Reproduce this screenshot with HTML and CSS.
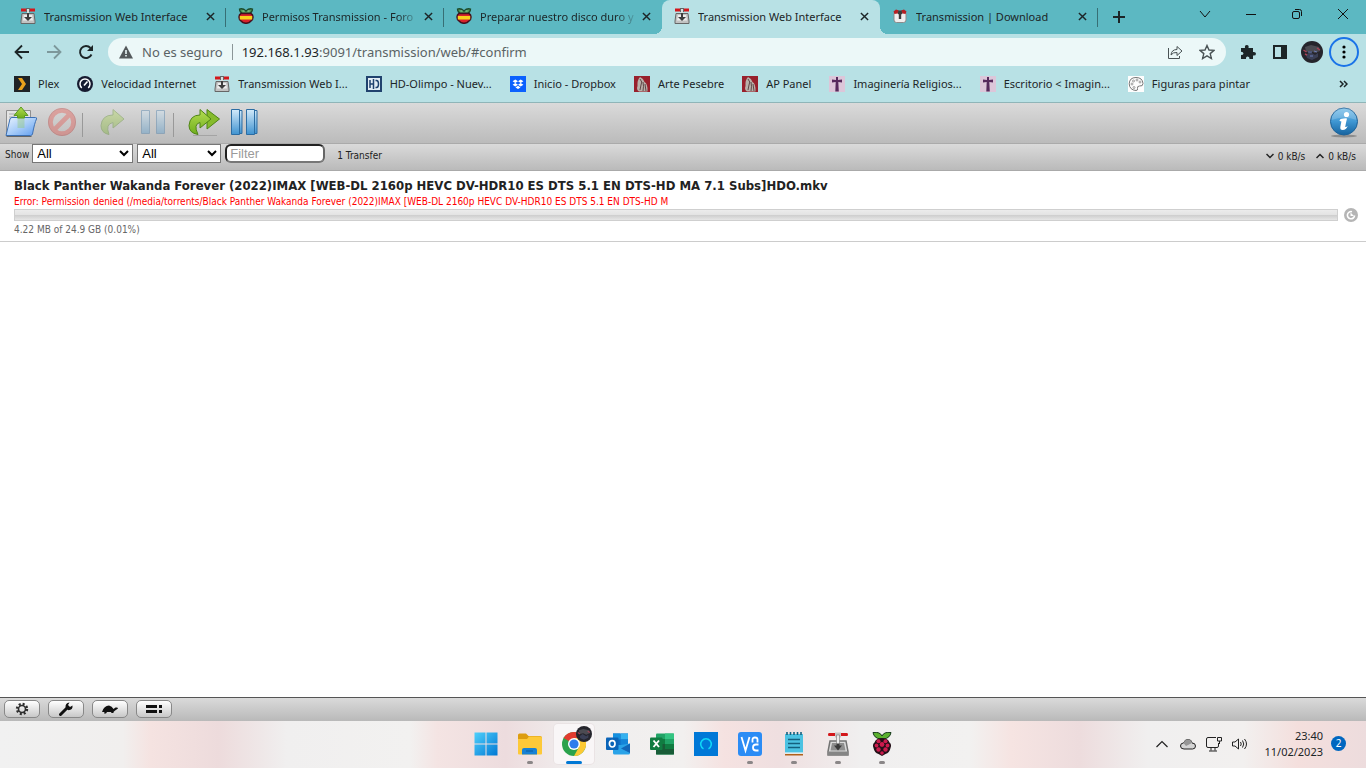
FILE: index.html
```html
<!DOCTYPE html>
<html lang="es">
<head>
    <meta charset="UTF-8">
    <meta name="viewport" content="width=device-width, initial-scale=1.0">
    <title>Transmission Web Interface</title>
    <link rel="stylesheet" href="styles.css">
</head>
<body>
    <!-- shared icons -->
    <svg class="sprite" aria-hidden="true">
        <defs>
            <linearGradient id="g-blue" x1="0" y1="0" x2="0" y2="1">
                <stop offset="0" stop-color="#d3eafa"/><stop offset="1" stop-color="#3f93d0"/>
            </linearGradient>
            <linearGradient id="g-folder" x1="0" y1="0" x2="1" y2="1">
                <stop offset="0" stop-color="#e9f3fe"/><stop offset=".5" stop-color="#a9cdf8"/><stop offset="1" stop-color="#5f9df0"/>
            </linearGradient>
            <linearGradient id="g-green" x1="0" y1="0" x2="0" y2="1">
                <stop offset="0" stop-color="#b5dd52"/><stop offset="1" stop-color="#6fae1c"/>
            </linearGradient>
            <linearGradient id="g-info" x1="0" y1="0" x2="0" y2="1">
                <stop offset="0" stop-color="#7dc1ea"/><stop offset=".5" stop-color="#3f97d3"/><stop offset="1" stop-color="#16639f"/>
            </linearGradient>
            <linearGradient id="g-win" x1="0" y1="0" x2="1" y2="1">
                <stop offset="0" stop-color="#4fd0fb"/><stop offset="1" stop-color="#0078d4"/>
            </linearGradient>
        </defs>
        <symbol id="i-transmission" viewBox="0 0 24 24">
            <path d="M4 9h16l2 10.500V23H2v-3.500z" fill="#dadada" stroke="#737373" stroke-width="1.500"/>
            <path d="M2 19.500h20V23H2z" fill="#858585"/>
            <path d="M6 11h12l1.500 7.500h-15z" fill="#8e8e8e"/>
            <path d="M3 1h18q1 0 1 1.500T21 4H3Q2 4 2 2.500T3 1z" fill="#d3171b"/>
            <path d="M9 .5h6v5H9z" fill="#c4c4c4"/>
            <path d="M10.500 3h3v11h-3z" fill="#ececec" stroke="#777" stroke-width=".6"/>
            <path d="M8 13.500h2.500v-2h3v2H16l-4 5z" fill="#3a3a3a"/>
        </symbol>
        <symbol id="i-transmission-small" viewBox="0 0 16 16">
            <path d="M2 5.500h12l1 7.500v2.500H1V13z" fill="#c2c2c2" stroke="#666"/>
            <path d="M4 7h8l1 5.500H3z" fill="#ececec"/>
            <path d="M1 .5h5v3H1zM10 .5h5v3h-5z" fill="#d3171b"/>
            <path d="M6 0h4v4H6z" fill="#666"/>
            <path d="M7 1h2v8H7z" fill="#ddd"/>
            <path d="M7 5h2v4h3l-4 4-4-4h3z" fill="#3d3d3d"/>
        </symbol>
        <symbol id="i-trdl" viewBox="0 0 16 16">
            <rect x="2" y="3.500" width="12" height="11" rx="2.500" fill="#f1eeee" stroke="#8b8b8b"/>
            <path d="M1.500 3.500L4 1.500l3 1-1.500 3-3 .5zM14.500 3.500L12 1.500l-3 1 1.500 3 3 .5z" fill="#b81f22"/>
            <path d="M6.500 2.500h3l1 3-1.300 1V11H6.800V6.500l-1.300-1z" fill="#3d3d3d"/>
        </symbol>
        <symbol id="i-pi-es" viewBox="0 0 16 16">
            <path d="M1.500 1q3.500-1 6.500 2 3-3 6.500-2 0 3-3 4.500h-7q-3-1.500-3-4.500z" fill="#4f9a58" stroke="#1d4a2c" stroke-width="1.300"/>
            <path d="M4.500 3h2M9.500 3h2" stroke="#8cc8a0"/>
            <path d="M3 5.500h10q2 1 2 3.500t-2 4q-2 2.300-5 2.300T3 13Q1 11.500 1 9t2-3.500z" fill="#d8222c" stroke="#45101d" stroke-width="1.500"/>
            <path d="M1.800 8h12.400v3.500H1.800z" fill="#f8d21c"/>
        </symbol>
        <symbol id="i-close" viewBox="0 0 10 10">
            <path d="M1 1l8 8M9 1l-8 8" stroke="currentColor" stroke-width="1.600" fill="none"/>
        </symbol>
        <symbol id="i-arte" viewBox="0 0 16 16">
            <path d="M0 0h16v16H0z" fill="#98202c"/>
            <path d="M6 1q3.500 1.500 4.500 5 3.500 2 3 9.500H5q-3-2-1.500-5.500Q3 4 6 1z" fill="#b9b0aa"/>
            <path d="M6 3q3 3 1 6l-1 5M9 6q1 4 0 9M11 8l1 7" stroke="#5f4848" fill="none"/>
        </symbol>
        <symbol id="i-cross" viewBox="0 0 16 16">
            <path d="M0 0h16v16H0z" fill="#dcc6d9"/>
            <path d="M7 1h2v3l4-.5v3L9.300 6l.5 9.500H6.300L6.700 6 3 6.500v-3l4 .5z" fill="#562a5c"/>
        </symbol>
    </svg>

    <div class="browser">
        <header class="chrome">
            <div class="tab-strip">
                <div class="tab">
                    <svg class="favicon"><use href="#i-transmission-small"/></svg>
                    <span class="tab-title">Transmission Web Interface</span>
                    <button class="tab-close" aria-label="Cerrar"><svg><use href="#i-close"/></svg></button>
                </div>
                <div class="tab">
                    <svg class="favicon"><use href="#i-pi-es"/></svg>
                    <span class="tab-title fade">Permisos Transmission - Foro</span>
                    <button class="tab-close" aria-label="Cerrar"><svg><use href="#i-close"/></svg></button>
                </div>
                <div class="tab before-active">
                    <svg class="favicon"><use href="#i-pi-es"/></svg>
                    <span class="tab-title fade">Preparar nuestro disco duro y</span>
                    <button class="tab-close" aria-label="Cerrar"><svg><use href="#i-close"/></svg></button>
                </div>
                <div class="tab active">
                    <svg class="favicon"><use href="#i-transmission-small"/></svg>
                    <span class="tab-title">Transmission Web Interface</span>
                    <button class="tab-close" aria-label="Cerrar"><svg><use href="#i-close"/></svg></button>
                </div>
                <div class="tab">
                    <svg class="favicon"><use href="#i-trdl"/></svg>
                    <span class="tab-title">Transmission | Download</span>
                    <button class="tab-close" aria-label="Cerrar"><svg><use href="#i-close"/></svg></button>
                </div>
                <button class="new-tab" aria-label="Nueva pestaña">
                    <svg viewBox="0 0 12 12"><path d="M6 0v12M0 6h12" stroke="#1c2527" stroke-width="2"/></svg>
                </button>
                <div class="window-controls">
                    <button aria-label="Buscar pestañas"><svg viewBox="0 0 12 12"><path d="M1 3l5 6 5-6"/></svg></button>
                    <button aria-label="Minimizar"><svg viewBox="0 0 12 12"><path d="M1 6.500h10"/></svg></button>
                    <button aria-label="Restaurar"><svg viewBox="0 0 12 12"><rect x="1.500" y="3.500" width="7" height="7" rx="1.500"/><path d="M4 1.500h4.500q2 0 2 2V8"/></svg></button>
                    <button aria-label="Cerrar ventana"><svg viewBox="0 0 12 12"><path d="M1 1l10 10M11 1L1 11"/></svg></button>
                </div>
            </div>

            <div class="nav-bar">
                <button class="nav-button" aria-label="Atrás"><svg viewBox="0 0 16 16"><path d="M15 8H2M8 1.500L1.500 8 8 14.500" fill="none" stroke="#1c2527" stroke-width="1.800"/></svg></button>
                <button class="nav-button" aria-label="Adelante"><svg viewBox="0 0 16 16"><path d="M1 8h13M8 1.500L14.500 8 8 14.500" fill="none" stroke="#7d989b" stroke-width="1.800"/></svg></button>
                <button class="nav-button" aria-label="Recargar"><svg viewBox="0 0 16 16"><path d="M13.500 10.500A6 6 0 1 1 12.500 4" fill="none" stroke="#1c2527" stroke-width="1.900"/><path d="M15 1v6H9z" fill="#1c2527"/></svg></button>
                <div class="omnibox">
                    <svg class="warn" viewBox="0 0 14 14"><path d="M7 .5L14 13.500H0z" fill="#53595b"/><path d="M6.200 5h1.600v4H6.200zM6.200 10h1.600v1.600H6.200z" fill="#ecf8f8"/></svg>
                    <span class="insecure">No es seguro</span>
                    <span class="divider"></span>
                    <a class="url" href="#confirm"><span class="host">192.168.1.93</span>:9091/transmission/web/#confirm</a>
                    <button class="omni-button" aria-label="Compartir"><svg viewBox="0 0 16 16"><path d="M1.500 4v10.500h11V12M4 11q.5-5.500 6-5.500V2.500L15 7l-5 4.500V8.500Q6 8 4 11z" fill="none" stroke="#4a5355"/></svg></button>
                    <button class="omni-button" aria-label="Favorito"><svg viewBox="0 0 16 16"><path d="M8 1.500l2 4.500 5 .4-3.800 3.200 1.200 4.900L8 11.900l-4.400 2.600 1.200-4.900L1 6.400 6 6z" fill="none" stroke="#4a5355" stroke-width="1.400"/></svg></button>
                </div>
                <button class="ext-button" aria-label="Extensiones"><svg viewBox="0 0 16 16"><path d="M1 4h4q-.6-3 1.800-3T8.500 4H13v4q3-.4 3 1.700T13 11.500V15H9.500q.2-2.600-1.800-2.600T6 15H1v-4q2.500 0 2.500-1.600T1 7.800z" fill="#1c2527"/></svg></button>
                <button class="ext-button" aria-label="Panel lateral"><svg viewBox="0 0 16 16"><path d="M1 1h14v14H1zM3 3v10h6V3z" fill="#1c2527" fill-rule="evenodd"/></svg></button>
                <button class="ext-button avatar" aria-label="Perfil"><svg viewBox="0 0 22 22"><circle cx="11" cy="11" r="11" fill="#25252c"/><path d="M4 6l6-2 8 2 1 4-5 2-4-2-5 1z" fill="#4b4b52"/><path d="M5 14l4-3 5 3 3-2v4l-6 3-5-2z" fill="#3a3f55"/><path d="M2.500 9l3 2M16 7l3 2M4 13l2 1" stroke="#a84256" stroke-width="1.500"/><path d="M7 11h4M13 10l3 1M9 15h3" stroke="#6b7db8"/></svg></button>
                <button class="menu-button" aria-label="Menú"><svg viewBox="0 0 4 14"><circle cx="2" cy="2" r="1.600"/><circle cx="2" cy="7" r="1.600"/><circle cx="2" cy="12" r="1.600"/></svg></button>
            </div>

            <nav class="bookmarks">
                <a href="#"><svg class="favicon" viewBox="0 0 16 16"><path d="M0 0h16v16H0z" fill="#1f2326"/><path d="M4 2h4l4 6-4 6H4l4-6z" fill="#e9a11c"/></svg>Plex</a>
                <a href="#"><svg class="favicon" viewBox="0 0 16 16"><circle cx="8" cy="8" r="8" fill="#161b30"/><path d="M4.800 11.800A5 5 0 1 1 11.200 11.800" fill="none" stroke="#fff" stroke-width="1.500"/><path d="M7 9.500l3.500-4" stroke="#fff" stroke-width="1.600"/></svg>Velocidad Internet</a>
                <a href="#"><svg class="favicon"><use href="#i-transmission-small"/></svg>Transmission Web I...</a>
                <a href="#"><svg class="favicon" viewBox="0 0 16 16"><path d="M0 0h16v16H0z" fill="#20426e"/><path d="M2 2h12v12H2z" fill="#e3edf5"/><path d="M4 4v8M4 8h3M7.500 3v10M9.500 4.500h1q2 0 2 3.500t-2 3.500h-1" fill="none" stroke="#20426e" stroke-width="1.500"/></svg>HD-Olimpo - Nuev...</a>
                <a href="#"><svg class="favicon" viewBox="0 0 16 16"><path d="M0 0h16v16H0z" fill="#0b61fe"/><path d="M5.300 3.500L8 5.200 5.300 7 2.600 5.200zM10.700 3.500l2.700 1.700L10.700 7 8 5.200zM5.300 7L8 8.700l-2.700 1.800-2.700-1.800zM10.700 7l2.700 1.700-2.700 1.800L8 8.700zM8 9.700l2.500 1.700L8 13l-2.500-1.600z" fill="#fff"/></svg>Inicio - Dropbox</a>
                <a href="#"><svg class="favicon"><use href="#i-arte"/></svg>Arte Pesebre</a>
                <a href="#"><svg class="favicon"><use href="#i-arte"/></svg>AP Panel</a>
                <a href="#"><svg class="favicon"><use href="#i-cross"/></svg>Imaginería Religios...</a>
                <a href="#"><svg class="favicon"><use href="#i-cross"/></svg>Escritorio &lt; Imagin...</a>
                <a href="#"><svg class="favicon" viewBox="0 0 16 16"><path d="M0 0h16v16H0z" fill="#fdfdfd"/><path d="M8 1.500q-6.500 0-6.800 6.300Q1.500 14 8 14.500q2 0 1.500-2-.5-2.500 2-2.500 3.500.5 3.500-2.500Q14.500 1.500 8 1.500z" fill="none" stroke="#777"/><g fill="none" stroke="#888" stroke-width=".8"><circle cx="4" cy="8" r="1"/><circle cx="5.500" cy="5" r="1"/><circle cx="9" cy="4" r="1"/><circle cx="12" cy="6" r="1"/><circle cx="6" cy="11.500" r="1"/></g></svg>Figuras para pintar</a>
                <button class="more" aria-label="Más marcadores"><svg viewBox="0 0 8 8"><path d="M.5 1l3 3-3 3M4.500 1l3 3-3 3" fill="none" stroke="#1c2527" stroke-width="1.500"/></svg></button>
            </nav>
        </header>

        <main class="app">
            <div class="toolbar">
                <button class="tool" aria-label="Open Torrent"><svg viewBox="0 0 32 32">
                    <path d="M1.500 29V4.500h24V12" fill="#e4e4e4" stroke="#8f8f8f"/>
                    <path d="M4 8h8M4 11h6M4 14h4" stroke="#aaa"/>
                    <path d="M1 29.500L5 13q.5-1.500 2-1.500h23.500q1.500 0 1 1.500-2 4-4 15-.5 1.500-2 1.500z" fill="url(#g-folder)" stroke="#3c70b4"/>
                    <path d="M12.500 22V9.500H9L16 1l7 8.500h-3.500V22z" fill="#8dc65c" opacity=".35"/>
                    <path d="M12.500 12V9.500H9L16 1l7 8.500h-3.500V12z" fill="url(#g-green)" stroke="#5b9a22"/>
                    <path d="M1.500 30.500h25" stroke="#666"/>
                </svg></button>
                <button class="tool" aria-label="Remove Selected Torrents" disabled><svg viewBox="0 0 32 32"><circle cx="16" cy="16" r="11.500" fill="none" stroke="#e8443c" stroke-width="4.600"/><path d="M8 24L24 8" stroke="#e8443c" stroke-width="4.600"/><circle cx="16" cy="16" r="13.600" fill="none" stroke="#b02621"/></svg></button>
                <span class="tool-separator"></span>
                <button class="tool" aria-label="Start Selected Torrents" disabled><svg viewBox="0 0 32 32"><path d="M12 28.500Q4 27 4 19.500 5 9 16 9V3.500L27 13 16 22V16.500Q8 18 12 28.500z" fill="url(#g-green)" stroke="#4f8514"/></svg></button>
                <button class="tool" aria-label="Pause Selected Torrents" disabled><svg viewBox="0 0 32 32"><path d="M4.500 4.500h8v23h-8zM19.500 4.500h8v23h-8z" fill="url(#g-blue)" stroke="#2c6da3"/></svg></button>
                <span class="tool-separator"></span>
                <button class="tool" aria-label="Start All Torrents"><svg viewBox="0 0 32 32"><path d="M5 29.500h24" stroke="#888" opacity=".5"/><path d="M19 9V3.500L31.500 13 19 23z" fill="#86bb2c" stroke="#4f8514"/><path d="M10 28.500Q1 27 1 19.500 2 9 12 9V3.500L23 13 12 22V16.500Q5 18 10 28.500z" fill="url(#g-green)" stroke="#4f8514"/></svg></button>
                <button class="tool" aria-label="Pause All Torrents"><svg viewBox="0 0 32 32"><path d="M7.500 4.500h6.500v23H7.500zM22.500 4.500h6.500v23h-6.500z" fill="url(#g-blue)" stroke="#2c6da3"/><path d="M3.500 3.500h8v25h-8zM18.500 3.500h8v25h-8z" fill="url(#g-blue)" stroke="#2c6da3"/></svg></button>
                <button class="tool inspector" aria-label="Toggle Inspector"><svg viewBox="0 0 32 32"><ellipse cx="16" cy="30" rx="13" ry="1.500" fill="#8d8d8d"/><circle cx="16" cy="15.500" r="13.500" fill="url(#g-info)" stroke="#1d6299"/><path d="M3.500 14a12.500 12.500 0 0 1 25 0q-12-5-25 0z" fill="#fff" opacity=".18"/><circle cx="18.500" cy="8.500" r="2.600" fill="#fff"/><path d="M12.500 13q5-1 6.500-.5-1 4-1.800 8.500 1 .3 2.500-1-1.500 4-5 4-3 0-2.300-3.500l1-5q-1-.7-2-.5z" fill="#fff"/></svg></button>
            </div>

            <div class="statusbar">
                <label for="filter-mode">Show</label>
                <select id="filter-mode" class="filter-mode"><option>All</option><option>Active</option></select>
                <select class="filter-tracker" aria-label="Tracker"><option>All</option></select>
                <input type="search" class="filter-text" placeholder="Filter" aria-label="Filter">
                <span class="count">1 Transfer</span>
                <span class="speed down"><svg viewBox="0 0 8 6"><path d="M.5 1L4 4.500 7.500 1"/></svg>0 kB/s</span>
                <span class="speed"><svg viewBox="0 0 8 6"><path d="M.5 5L4 1.500 7.500 5"/></svg>0 kB/s</span>
            </div>

            <ul class="torrent-list">
                <li class="torrent">
                    <div class="torrent-name">Black Panther Wakanda Forever (2022)IMAX [WEB-DL 2160p HEVC DV-HDR10 ES DTS 5.1 EN DTS-HD MA 7.1 Subs]HDO.mkv</div>
                    <div class="torrent-error">Error: Permission denied (/media/torrents/Black Panther Wakanda Forever (2022)IMAX [WEB-DL 2160p HEVC DV-HDR10 ES DTS 5.1 EN DTS-HD M</div>
                    <div class="progress-row">
                        <div class="progress-bar"></div>
                        <button class="resume" aria-label="Resume"><svg viewBox="0 0 14 14"><circle cx="7" cy="7" r="7" fill="#b5b5b5"/><path d="M8 3.700A3.600 3.600 0 1 0 10.600 7.500" fill="none" stroke="#fff" stroke-width="1.600"/><path d="M6.500 4.500v3.500H10z" fill="#fff"/></svg></button>
                    </div>
                    <div class="torrent-details">4.22 MB of 24.9 GB (0.01%)</div>
                </li>
            </ul>

            <footer class="app-footer">
                <button aria-label="Settings"><svg viewBox="0 0 14 14"><circle cx="7" cy="7" r="5" fill="none" stroke="#2d2d2d" stroke-width="2.400" stroke-dasharray="2 1.930"/><circle cx="7" cy="7" r="3.500" fill="none" stroke="#2d2d2d" stroke-width="1.600"/></svg></button>
                <button aria-label="Preferences"><svg viewBox="0 0 14 14"><path d="M1.500 12.500L8 6" stroke="#111" stroke-width="3" stroke-linecap="round"/><path d="M7 6.500Q5.500 3 8.500 1l2-.5L9 3l2 2 2.500-1.500Q14 8 9.500 8.200z" fill="#111"/></svg></button>
                <button aria-label="Alternative Speed Limits"><svg class="wide" viewBox="0 0 18 14"><path d="M1 10Q3 3.500 8 3.500 11 4 12.500 7L14.500 5.500q2.500-.5 2.500 1L13.500 9 12.500 10v1h-2L10 10H6L5 11.500H3L3.500 10z" fill="#111"/></svg></button>
                <button aria-label="Compact View"><svg class="wide" viewBox="0 0 18 14"><path d="M1 3h11v3H1zM1 8h11v3H1zM14 3h3v3h-3zM14 8h3v3h-3z" fill="#111"/></svg></button>
            </footer>
        </main>
    </div>

    <div class="taskbar">
        <div class="task-apps">
            <button class="task" aria-label="Inicio"><svg viewBox="0 0 24 24"><path d="M.5.500h11v11H.500zM12.500.500h11v11h-11zM.5 12.500h11v11H.500zM12.500 12.500h11v11h-11z" fill="url(#g-win)"/></svg></button>
            <button class="task running" aria-label="Explorador"><svg viewBox="0 0 24 24"><path d="M0 3q0-1.500 1.500-1.500H8L10.500 4H22q2 0 2 2v4H0z" fill="#dd9d10"/><path d="M0 7h9l2-2.500h11.500Q24 4.500 24 6v15.500q0 1-1 1H1q-1 0-1-1z" fill="#fdc938"/><path d="M4 22.500V18q0-2 2-2h11q2 0 2 2v4.500z" fill="#1681d4"/><path d="M8 19h7" stroke="#0b5b9f"/></svg></button>
            <button class="task current" aria-label="Google Chrome"><svg viewBox="0 0 24 24"><circle cx="12" cy="12" r="12" fill="#2ba24c"/><path d="M12 12L1.600 6A12 12 0 0 1 22.400 6z" fill="#e33b2e"/><path d="M12 12V6h10.400A12 12 0 0 1 12 24l5-9z" fill="#fcc934"/><circle cx="12" cy="12" r="6" fill="#fff"/><circle cx="12" cy="12" r="4.600" fill="#2f7cec"/></svg><svg class="badge" viewBox="0 0 22 22"><circle cx="11" cy="11" r="11" fill="#25252c"/><path d="M4 6l6-2 8 2 1 4-5 2-4-2-5 1z" fill="#4b4b52"/><path d="M5 14l4-3 5 3 3-2v4l-6 3-5-2z" fill="#3a3f55"/><path d="M2.500 9l3 2M16 7l3 2" stroke="#a84256" stroke-width="1.500"/></svg></button>
            <button class="task" aria-label="Outlook"><svg viewBox="0 0 24 24"><path d="M7 1.500h15v12H7z" fill="#0f6cc4"/><path d="M7 1.500h7v6H7z" fill="#1490df"/><path d="M14.500 1.500H22v6h-7.500z" fill="#35b1ef"/><path d="M14.500 7.500H22v6h-7.500z" fill="#1484d8"/><path d="M7 13h8l9-1.500v9.500q0 1.500-1.500 1.500H8.500Q7 22.500 7 21z" fill="#2aa3e8"/><path d="M15 16.500l9-5V21z" fill="#1266b8"/><rect y="5.500" width="12.500" height="12.500" rx="1" fill="#0a64b8"/><ellipse cx="6.200" cy="11.800" rx="2.800" ry="3.200" fill="none" stroke="#fff" stroke-width="1.700"/></svg></button>
            <button class="task" aria-label="Excel"><svg viewBox="0 0 24 24"><rect x="6" y="1.500" width="18" height="21" rx="1" fill="#21a366"/><path d="M15 1.500h9v5.500h-9z" fill="#33c481"/><path d="M6 7h9v5H6z" fill="#107c41"/><path d="M6 12h18v10.500H6z" fill="#185c37"/><path d="M15 12h9v5h-9z" fill="#107c41"/><rect y="5.500" width="12.500" height="12.500" rx="1" fill="#107c41"/><path d="M3.500 8.500l5.500 6.500M9 8.500L3.500 15" stroke="#fff" stroke-width="1.900"/></svg></button>
            <button class="task" aria-label="Alexa"><svg viewBox="0 0 24 24"><path d="M0 0h24v24H0z" fill="#0078d7"/><path d="M9.500 16.800a5.300 5.300 0 1 1 5 0" fill="none" stroke="#0fd8f8" stroke-width="1.500"/></svg></button>
            <button class="task running" aria-label="VNC Viewer"><svg viewBox="0 0 24 24"><rect width="24" height="24" rx="3" fill="#2b8cf5"/><path d="M3.500 5l4 13.500 4-13.500M14.500 10.500V7.500q0-2 2.500-2t2.500 2v3M20.500 12.500H18q-3 0-3 3t3 3h2.500" fill="none" stroke="#fff" stroke-width="1.800"/></svg></button>
            <button class="task running" aria-label="Bloc de notas"><svg viewBox="0 0 24 24"><path d="M3 20h18v3.500H3z" fill="#b0601b"/><path d="M3 2h18v19.500H3z" fill="#4cc2e2"/><path d="M3 20.500h18v1.300H3z" fill="#fff"/><path d="M5 0v3M8.500 0v3M12 0v3M15.500 0v3M19 0v3" stroke="#14607e" stroke-width="1.600"/><path d="M6 7.500h12M6 11.500h12M6 15.500h12" stroke="#14607e" stroke-width="1.600"/></svg></button>
            <button class="task running" aria-label="Transmission"><svg viewBox="0 0 24 24"><use href="#i-transmission"/></svg></button>
            <button class="task running" aria-label="Raspberry Pi Imager"><svg viewBox="0 0 24 24"><path d="M3 .5Q10-.5 12 4 14-.5 21 .5 20 6 14 7h-4Q4 6 3 .5z" fill="#5bb12f" stroke="#15391b"/><path d="M12 6q6 0 7.500 4.500 2.500 2 1 5.500-1 5-5 6l-3.500 2L8.500 22q-4-1-5-6-1.500-3.500 1-5.500Q6 6 12 6z" fill="#231018"/><g fill="#cc1b4d"><circle cx="8.500" cy="9.300" r="2"/><circle cx="15.500" cy="9.300" r="2"/><circle cx="12" cy="12.500" r="2.400"/><circle cx="6.500" cy="13.500" r="1.900"/><circle cx="17.500" cy="13.500" r="1.900"/><circle cx="8.500" cy="17.500" r="2.200"/><circle cx="15.500" cy="17.500" r="2.200"/><circle cx="12" cy="21" r="1.800"/></g></svg></button>
        </div>
        <div class="tray">
            <button aria-label="Iconos ocultos"><svg viewBox="0 0 16 16"><path d="M2.500 11L8 5.500l5.500 5.500" fill="none" stroke="#222" stroke-width="1.200"/></svg></button>
            <button aria-label="OneDrive"><svg viewBox="0 0 16 16"><path d="M4 13Q.5 13 .5 10T3.500 7Q5 3 8.500 3.500T12 7q3.500 0 3.500 3t-3 3z" fill="#d4d4d4" stroke="#222"/><path d="M3.500 7Q5 3 8.500 3.500T12 7l-6 3z" fill="#969696"/></svg></button>
            <button aria-label="Red"><svg viewBox="0 0 16 16"><path d="M10 1.500H2q-1.500 0-1.500 1.500v7q0 1.500 1.500 1.500h9q1.500 0 1.500-1.500V7M5 11.500v3M9 11.500v3M3 15h8M11.500 1.500h4V5h-4zM13.500 5v3" fill="none" stroke="#222"/></svg></button>
            <button aria-label="Volumen"><svg viewBox="0 0 16 16"><path d="M.5 6v4H3l3.500 3V3L3 6zM8.500 6q1.500 2 0 4M10.500 4.500q2.500 3.500 0 7M12.500 3q4 5 0 10" fill="none" stroke="#222"/></svg></button>
            <div class="clock"><span>23:40</span><span>11/02/2023</span></div>
            <span class="notifications">2</span>
        </div>
    </div>
</body>
</html>
```
FILE: styles.css
```css
* {
    margin: 0;
    padding: 0;
    box-sizing: border-box;
}

body {
    display: flex;
    flex-direction: column;
    min-height: 100vh;
    font-family: "Noto Sans", "Open Sans", sans-serif;
    font-size: 11px;
    color: #1c2527;
    background: #fff;
}

button {
    background: none;
    border: none;
    font: inherit;
    color: inherit;
}

a {
    color: inherit;
    text-decoration: none;
}

svg {
    display: block;
    flex: none;
}

.sprite {
    position: absolute;
    width: 0;
    height: 0;
}

.favicon {
    width: 16px;
    height: 16px;
}

.browser {
    flex: 1;
    display: flex;
    flex-direction: column;
}

.chrome {
    background: #b8e1e5;
}

/* tabs */
.tab-strip {
    display: flex;
    height: 34px;
    padding-left: 8px;
    background: #5cb8c2;
}

.tab {
    flex: 0 1 218px;
    min-width: 0;
    display: flex;
    align-items: center;
    padding: 0 7px 2px 12px;
    position: relative;
}

.tab::after {
    content: "";
    position: absolute;
    right: 0;
    top: 8px;
    width: 1px;
    height: 19px;
    background: #376f75;
}

.tab.before-active::after {
    display: none;
}

.tab.active {
    background: #b8e1e5;
    border-radius: 8px 8px 0 0;
}

/* the curved feet of the selected tab */
.tab.active::before,
.tab.active::after {
    content: "";
    position: absolute;
    top: auto;
    bottom: 0;
    width: 8px;
    height: 8px;
}

.tab.active::before {
    left: -8px;
    background: radial-gradient(circle at 0 0, transparent 8px, #b8e1e5 8px);
}

.tab.active::after {
    right: -8px;
    background: radial-gradient(circle at 100% 0, transparent 8px, #b8e1e5 8px);
}

.tab-title {
    flex: 1;
    margin-left: 8px;
    overflow: hidden;
    white-space: nowrap;
}

.tab-title.fade {
    -webkit-mask-image: linear-gradient(to right, #000 86%, transparent);
    mask-image: linear-gradient(to right, #000 86%, transparent);
}

.tab-close {
    padding: 4px;
}

.tab-close svg {
    width: 9px;
    height: 9px;
}

.new-tab {
    padding: 0 15px;
}

.new-tab svg {
    width: 12px;
    height: 12px;
}

.window-controls {
    display: flex;
    margin-left: auto;
}

.window-controls button {
    width: 46px;
    height: 28px;
    display: flex;
    align-items: center;
    justify-content: center;
}

.window-controls svg {
    width: 12px;
    height: 12px;
    fill: none;
    stroke: #111;
}

/* address bar */
.nav-bar {
    display: flex;
    align-items: center;
    height: 36px;
    padding: 0 7px 0 6px;
}

.nav-button {
    width: 32px;
    padding: 8px;
}

.nav-button svg,
.ext-button svg,
.omni-button svg {
    width: 16px;
    height: 16px;
}

.omnibox {
    flex: 1;
    display: flex;
    align-items: center;
    height: 28px;
    margin: 0 6px;
    padding: 0 3px 0 11px;
    border-radius: 14px;
    background: #ecf8f8;
    font-size: 13px;
    color: #5a6365;
}

.warn {
    width: 14px;
    height: 14px;
    margin-right: 9px;
}

.divider {
    width: 1px;
    height: 16px;
    margin: 0 9px;
    background: #8b9698;
}

.url {
    flex: 1;
}

.host {
    color: #1c2527;
}

.omni-button {
    padding: 8px;
}

.ext-button {
    padding: 8px;
}

.avatar {
    padding: 5px 6px 5px 5px;
}

.avatar svg {
    width: 22px;
    height: 22px;
}

.menu-button {
    width: 30px;
    height: 30px;
    display: flex;
    align-items: center;
    justify-content: center;
    border: 2px solid #1a73e8;
    border-radius: 50%;
}

.menu-button svg {
    width: 4px;
    height: 14px;
}

/* bookmarks */
.bookmarks {
    display: flex;
    align-items: center;
    gap: 18px;
    height: 32px;
    padding: 0 18px 5px 14px;
}

.bookmarks a {
    display: flex;
    align-items: center;
    gap: 8px;
    white-space: nowrap;
}

.more {
    margin-left: auto;
}

.more svg {
    width: 9px;
    height: 8px;
}

/* transmission */
.app {
    flex: 1;
    display: flex;
    flex-direction: column;
    font-family: "DejaVu Sans Condensed", "DejaVu Sans", sans-serif;
    font-size: 10px;
    color: #222;
}

.toolbar {
    display: flex;
    align-items: center;
    height: 42px;
    padding: 0 6px 3px 5px;
    border-top: 1px solid #8fb5b8;
    border-bottom: 1px solid #aaa;
    background: linear-gradient(#dadada, #bbb);
}

.tool {
    margin-right: 9px;
}

.tool svg {
    width: 32px;
    height: 32px;
}

.tool:disabled {
    opacity: .35;
}

.tool-separator {
    width: 1px;
    height: 24px;
    margin: 6px 14px 0 -5px;
    background: #999;
}

.tool-separator + .tool {
    margin-right: 8px;
}

.inspector {
    margin: 0 0 0 auto;
}

.statusbar {
    display: flex;
    align-items: center;
    height: 27px;
    padding: 0 10px 7px 5px;
    border-bottom: 1px solid #aaa;
    background: linear-gradient(#dadada, #bababa);
}

.statusbar label {
    margin-top: 2px;
}

.statusbar select,
.filter-text {
    height: 19px;
    font-family: "Liberation Sans", Arial, sans-serif;
    font-size: 13px;
    background-color: #fff;
}

.statusbar select {
    border: 1px solid #767676;
    margin-right: 4px;
}

.filter-mode {
    width: 101px;
    margin-left: 3px;
}

.filter-tracker {
    width: 84px;
}

.filter-text {
    width: 100px;
    padding: 0 3px;
    border: 2px solid #222;
    border-bottom-color: #777;
    border-right-color: #666;
    border-radius: 6px;
    outline: none;
}

.filter-text::placeholder {
    color: #9a9a9a;
}

.count {
    margin: 3px auto 0 12px;
}

.speed {
    display: flex;
    align-items: center;
    gap: 4px;
    margin-top: 5px;
}

.speed.down {
    margin-right: 11px;
}

.speed svg {
    width: 8px;
    height: 6px;
    fill: none;
    stroke: #222;
    stroke-width: 1.5;
}

.torrent-list {
    flex: 1;
    list-style: none;
}

.torrent {
    padding: 6px 8px 4px 14px;
    border-bottom: 1px solid #ccc;
}

.torrent-name {
    font-size: 13px;
    font-weight: bold;
    line-height: 18px;
}

.torrent-error {
    line-height: 13px;
    color: #f00;
}

.progress-row {
    display: flex;
    align-items: center;
    gap: 6px;
}

.progress-bar {
    flex: 1;
    height: 12px;
    border: 1px solid #cfcfcf;
    background: linear-gradient(#ececec, #e4e4e4 45%, #cdcdcd 50%, #e6e6e6);
}

.resume svg {
    width: 14px;
    height: 14px;
}

.torrent-details {
    line-height: 14px;
    padding-top: 1px;
    color: #666;
}

.app-footer {
    display: flex;
    gap: 8px;
    height: 24px;
    padding: 2px 4px;
    border-top: 1px solid #555;
    background: linear-gradient(#dadada, #b9b9b9);
}

.app-footer button {
    width: 36px;
    height: 18px;
    display: flex;
    align-items: center;
    justify-content: center;
    border: 1px solid #888;
    border-radius: 5px;
    background: linear-gradient(#fff, #c8c8c8);
}

.app-footer svg {
    width: 14px;
    height: 14px;
}

.app-footer .wide {
    width: 18px;
}

/* windows taskbar */
.taskbar {
    display: grid;
    grid-template-columns: 1fr auto 1fr;
    align-items: center;
    height: 47px;
    padding: 0 0 2px 2px;
    background: linear-gradient(to right, #f1f1f1 0, #f1efee 9%, #f5e3e1 11%, #eddbdc 16%, #f0efef 21%, #f2f1f0 30%, #f4e4e3 32%, #eddcde 37%, #f0eeee 42%, #f2f0ef 50%, #f5e2e1 53%, #efdfe0 57%, #f0efef 63%, #f2f1f0 71%, #f6e4e2 74%, #eddcdd 79%, #f0efef 84%, #f2f0ef 91%, #f4dfdd 95%, #eddcdd 100%);
}

.task-apps {
    grid-column: 2;
    display: flex;
    gap: 4px;
}

.task {
    position: relative;
    width: 40px;
    height: 40px;
    display: flex;
    align-items: center;
    justify-content: center;
    border-radius: 4px;
}

.task svg {
    width: 24px;
    height: 24px;
}

.task.current {
    background: #f9f6f7;
    box-shadow: 0 0 0 1px #eae3e4;
}

.task.running::after,
.task.current::after {
    content: "";
    position: absolute;
    bottom: 0;
    left: 17px;
    width: 6px;
    height: 3px;
    border-radius: 2px;
    background: #8a8687;
}

.task.current::after {
    left: 12px;
    width: 16px;
    background: #0078d4;
}

.task .badge {
    position: absolute;
    top: 2px;
    right: 2px;
    width: 16px;
    height: 16px;
}

.tray {
    display: flex;
    align-items: center;
    justify-content: flex-end;
    padding-right: 20px;
}

.tray button {
    padding: 4px;
    margin-right: 2px;
}

.tray svg {
    width: 16px;
    height: 16px;
}

.clock {
    display: flex;
    flex-direction: column;
    text-align: right;
    line-height: 16px;
    margin: 0 8px 0 10px;
}

.notifications {
    width: 15px;
    height: 15px;
    border-radius: 50%;
    background: #0067c0;
    color: #fff;
    font-size: 10px;
    line-height: 15px;
    text-align: center;
}
```
